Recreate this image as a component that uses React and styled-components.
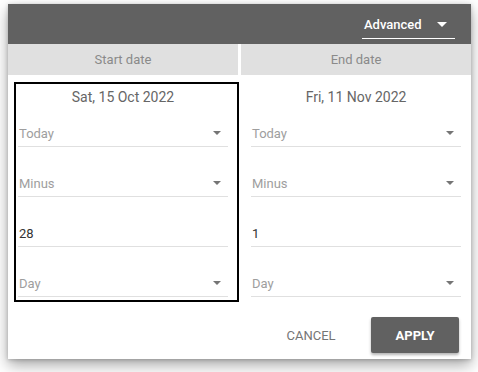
import styled, { createGlobalStyle } from "styled-components";

const fields = {
    start: { title: "Sat, 15 Oct 2022", rows: [["Today", true], ["Minus", true], ["28", false], ["Day", true]] },
    end: { title: "Fri, 11 Nov 2022", rows: [["Today", true], ["Minus", true], ["1", false], ["Day", true]] }
};

export default function App() {
    return (
        <>
            <GlobalStyle />
            <Page>
                <Dialog>
                    <Header>
                        <ModeSelect>
                            <ModeText>Advanced</ModeText>
                            <Caret light />
                        </ModeSelect>
                    </Header>

                    <Tabs>
                        <Tab>Start date</Tab>
                        <Tab>End date</Tab>
                    </Tabs>

                    <Columns>
                        <Column selected>
                            <DateTitle>{fields.start.title}</DateTitle>
                            {fields.start.rows.map(([label, select], i) => (
                                <Field key={i}>
                                    <FieldText placeholder={select}>{label}</FieldText>
                                    {select && <Caret />}
                                </Field>
                            ))}
                        </Column>

                        <Column>
                            <DateTitle>{fields.end.title}</DateTitle>
                            {fields.end.rows.map(([label, select], i) => (
                                <Field key={i}>
                                    <FieldText placeholder={select}>{label}</FieldText>
                                    {select && <Caret />}
                                </Field>
                            ))}
                        </Column>
                    </Columns>

                    <Footer>
                        <Button>Cancel</Button>
                        <Button primary>Apply</Button>
                    </Footer>
                </Dialog>
            </Page>
        </>
    );
}

const GlobalStyle = createGlobalStyle`
    html, body {
        margin: 0;
        padding: 0;
        background: #ffffff;
        font-family: Roboto, "Liberation Sans", sans-serif;
    }
`;

const Page = styled.div`
    width: 478px;
    height: 372px;
    padding: 4px 0 0 8px;
    box-sizing: border-box;
    overflow: hidden;
`;

const Dialog = styled.div`
    width: 463px;
    height: 355px;
    background: #ffffff;
    box-shadow: 0 6px 14px rgba(0, 0, 0, 0.35), 0 1px 4px rgba(0, 0, 0, 0.2);
    display: flex;
    flex-direction: column;
`;

const Header = styled.div`
    height: 40px;
    background: #616161;
    display: flex;
    justify-content: flex-end;
    align-items: flex-end;
    padding: 0 16px 5px 0;
    box-sizing: border-box;
`;

const ModeSelect = styled.div`
    width: 93px;
    height: 26px;
    border-bottom: 1px solid #ffffff;
    box-sizing: border-box;
    display: flex;
    align-items: center;
    justify-content: space-between;
    padding: 0 8px 2px 2px;
`;

const ModeText = styled.span`
    color: #ffffff;
    font-size: 13px;
    font-weight: 500;
`;

const Caret = styled.span`
    width: 0;
    height: 0;
    border-left: ${(p) => (p.light ? 5 : 4)}px solid transparent;
    border-right: ${(p) => (p.light ? 5 : 4)}px solid transparent;
    border-top: ${(p) => (p.light ? 5 : 4)}px solid ${(p) => (p.light ? "#ffffff" : "#757575")};
`;

const Tabs = styled.div`
    display: grid;
    grid-template-columns: 230px 230px;
    gap: 3px;
`;

const Tab = styled.div`
    height: 31px;
    background: #e0e0e0;
    color: #8a8a8a;
    font-size: 13px;
    display: flex;
    align-items: center;
    justify-content: center;
`;

const Columns = styled.div`
    display: flex;
    margin-top: 7px;
`;

const Column = styled.div`
    width: ${(p) => (p.selected ? "225px" : "230px")};
    margin-left: ${(p) => (p.selected ? "6px" : "2px")};
    border: 2px solid ${(p) => (p.selected ? "#000000" : "transparent")};
    box-sizing: border-box;
    padding: 3px ${(p) => (p.selected ? "9px 3px 2px" : "8px 3px 8px")};
    display: flex;
    flex-direction: column;
`;

const DateTitle = styled.div`
    height: 20px;
    line-height: 20px;
    text-align: center;
    color: #666666;
    font-size: 14px;
`;

const Field = styled.div`
    height: 40px;
    border-bottom: 1px solid #e0e0e0;
    display: flex;
    align-items: flex-end;
    justify-content: space-between;
    padding: 0 7px 2px 1px;
    box-sizing: border-box;

    & + & {
        margin-top: 10px;
    }

    ${Caret} {
        margin-bottom: 9px;
    }
`;

const FieldText = styled.span`
    line-height: 20px;
    font-size: 13px;
    color: ${(p) => (p.placeholder ? "#9e9e9e" : "#333333")};
`;

const Footer = styled.div`
    display: flex;
    justify-content: flex-end;
    gap: 16px;
    margin-top: 15px;
    padding: 0 12px;
`;

const Button = styled.button`
    width: 88px;
    height: 36px;
    border: none;
    border-radius: 2px;
    font-family: Roboto, "Liberation Sans", sans-serif;
    font-size: 13px;
    font-weight: ${(p) => (p.primary ? 700 : 400)};
    text-transform: uppercase;
    color: ${(p) => (p.primary ? "#ffffff" : "#757575")};
    background: ${(p) => (p.primary ? "#616161" : "transparent")};
    box-shadow: ${(p) => (p.primary ? "0 2px 3px rgba(0, 0, 0, 0.3)" : "none")};
    cursor: pointer;
`;
